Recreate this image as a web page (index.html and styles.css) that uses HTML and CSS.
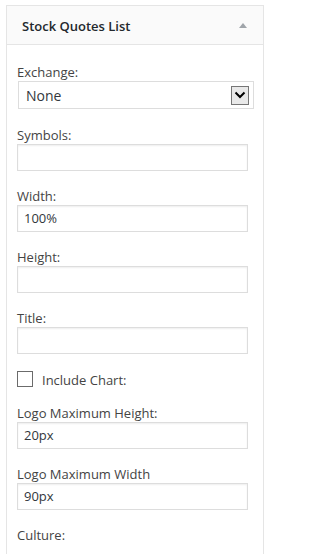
FILE: index.html
```html
<!DOCTYPE html>
<html>
<head>
<meta charset="utf-8">
<link rel="stylesheet" href="styles.css">
</head>
<body>
<div class="widget">
  <div class="widget-top">
    <span class="widget-title">Stock Quotes List</span>
    <span class="toggle"></span>
  </div>
  <div class="widget-inside">
    <div class="field">
      <label class="lbl">Exchange:</label>
      <div class="select">
        <span class="select-value">None</span>
        <span class="select-arrow">
          <svg width="12" height="8" viewBox="0 0 12 8"><path d="M1.5 1.5 L6 6 L10.5 1.5" fill="none" stroke="#000" stroke-width="2"/></svg>
        </span>
      </div>
    </div>
    <div class="field">
      <label class="lbl">Symbols:</label>
      <div class="input"></div>
    </div>
    <div class="field">
      <label class="lbl">Width:</label>
      <div class="input">100%</div>
    </div>
    <div class="field">
      <label class="lbl">Height:</label>
      <div class="input"></div>
    </div>
    <div class="field">
      <label class="lbl">Title:</label>
      <div class="input"></div>
    </div>
    <div class="check-row">
      <span class="checkbox"></span>
      <span class="check-label">Include Chart:</span>
    </div>
    <div class="field">
      <label class="lbl">Logo Maximum Height:</label>
      <div class="input">20px</div>
    </div>
    <div class="field">
      <label class="lbl">Logo Maximum Width</label>
      <div class="input">90px</div>
    </div>
    <div class="field last">
      <label class="lbl">Culture:</label>
    </div>
  </div>
</div>
</body>
</html>
```

FILE: styles.css
```css
html, body {
  margin: 0;
  padding: 0;
  background: #ffffff;
}
body {
  font-family: "Open Sans", "Liberation Sans", sans-serif;
  font-size: 13px;
  color: #444444;
}
.widget {
  margin: 5px 0 0 6px;
  width: 258px;
  box-sizing: border-box;
  border: 1px solid #e5e5e5;
  background: #ffffff;
}
.widget-top {
  height: 38px;
  background: #fafafa;
  border-bottom: 1px solid #e5e5e5;
  display: flex;
  align-items: center;
  justify-content: space-between;
  padding: 0 16px 0 15px;
}
.widget-title {
  font-weight: 600;
  font-size: 13px;
  color: #23282d;
  line-height: 18px;
  margin-top: 2px;
}
.toggle {
  width: 0;
  height: 0;
  border-left: 4px solid transparent;
  border-right: 4px solid transparent;
  border-bottom: 5px solid #a0a5aa;
  margin-top: 1px;
}
.widget-inside {
  padding: 18px 15px 40px 10px;
  display: flex;
  flex-direction: column;
}
.field {
  display: flex;
  flex-direction: column;
  margin-bottom: 16px;
}
.field.last {
  margin-bottom: 0;
}
.lbl {
  line-height: 18px;
  color: #444444;
}
.input {
  box-sizing: border-box;
  height: 27px;
  width: 231px;
  border: 1px solid #dddddd;
  box-shadow: inset 0 1px 2px rgba(0,0,0,0.07);
  padding: 0 6px;
  line-height: 25px;
  color: #32373c;
  font-size: 13px;
}
.select {
  box-sizing: border-box;
  height: 28px;
  width: 236px;
  margin-left: 1px;
  border: 1px solid #dddddd;
  display: flex;
  align-items: center;
  justify-content: space-between;
  padding: 0 4px 0 7px;
  font-size: 14px;
  color: #32373c;
}
.field:first-child {
  margin-bottom: 17px;
}
.select-arrow {
  box-sizing: border-box;
  width: 18px;
  height: 19px;
  background: #e9e9e9;
  border: 1px solid #767676;
  display: flex;
  align-items: center;
  justify-content: center;
}
.select-arrow svg {
  display: block;
}
.check-row {
  display: flex;
  align-items: center;
  height: 16px;
  margin-top: 1px;
  margin-bottom: 17px;
}
.checkbox {
  box-sizing: border-box;
  width: 16px;
  height: 16px;
  border: 1px solid #6b6b6b;
  background: #ffffff;
}
.check-label {
  margin-left: 9px;
  line-height: 18px;
  margin-top: 1px;
}
```
